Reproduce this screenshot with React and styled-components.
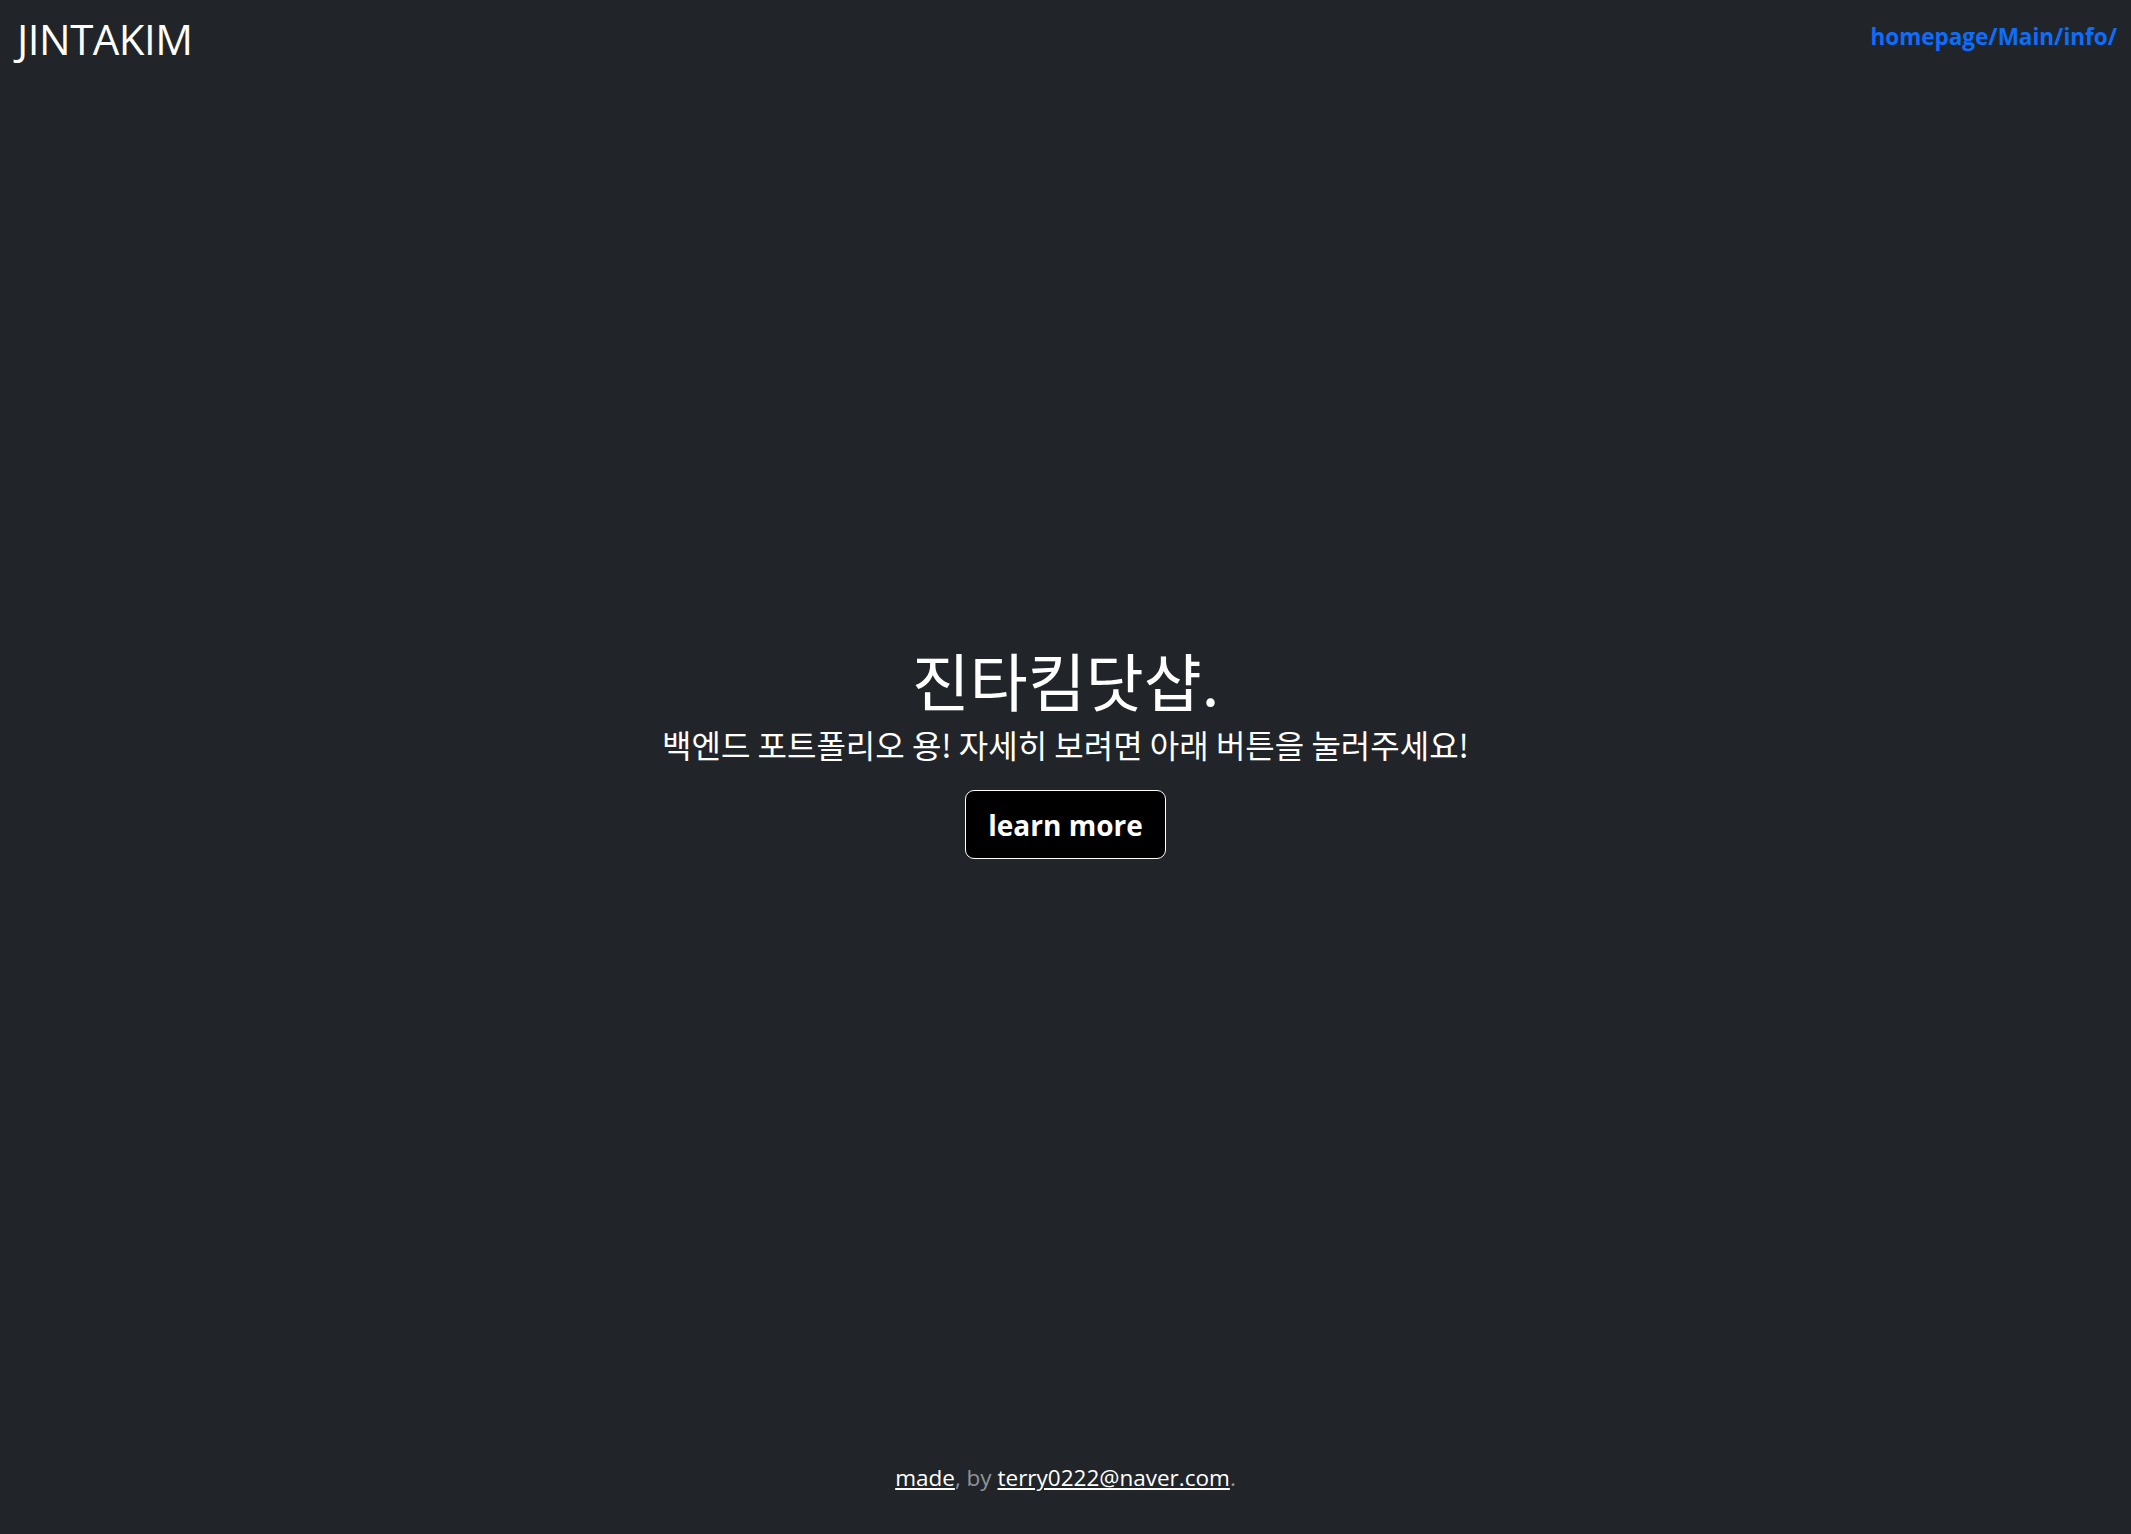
import styled, { createGlobalStyle } from 'styled-components';

const GlobalStyle = createGlobalStyle`
  html, body {
    margin: 0;
    padding: 0;
    height: 100%;
    background-color: #212529;
  }
  #root {
    height: 100%;
  }
`;

const App = () => {
  return (
    <>
      <GlobalStyle />
      <Page>
        <Header>
          <Brand>JINTAKIM</Brand>
          <NavLink href="#">homepage/Main/info/</NavLink>
        </Header>
        <Main>
          <Title>진타킴닷샵.</Title>
          <Lead>백엔드 포트폴리오 용! 자세히 보려면 아래 버튼을 눌러주세요!</Lead>
          <LearnButton>learn more</LearnButton>
        </Main>
        <Footer>
          <FooterLink href="#">made</FooterLink>, by{' '}
          <FooterLink href="#">terry0222@naver.com</FooterLink>.
        </Footer>
      </Page>
    </>
  );
};

export default App;

const Page = styled.div`
  display: flex;
  flex-direction: column;
  min-height: 100vh;
  color: #fff;
  font-family: 'Open Sans', 'Noto Sans CJK KR', sans-serif;
  text-align: center;
`;

const Header = styled.header`
  display: flex;
  justify-content: space-between;
  align-items: flex-start;
  padding: 14px 14px 0 17px;
`;

const Brand = styled.h3`
  margin: 0;
  font-size: 42px;
  font-weight: 400;
  line-height: 1.2;
  letter-spacing: -0.5px;
`;

const NavLink = styled.a`
  margin-top: 6px;
  color: #0d6efd;
  font-size: 22.5px;
  font-weight: 700;
  text-decoration: none;
  line-height: 1.5;
`;

const Main = styled.main`
  flex: 1;
  display: flex;
  flex-direction: column;
  align-items: center;
  justify-content: center;
  padding-bottom: 26px;
`;

const Title = styled.h1`
  margin: 0;
  font-family: 'Noto Sans CJK KR', sans-serif;
  font-size: 63px;
  font-weight: 400;
  line-height: 1.2;
`;

const Lead = styled.p`
  margin: 4px 0 22px;
  font-family: 'Noto Sans CJK KR', sans-serif;
  font-size: 32px;
  font-weight: 400;
  line-height: 1.5;
`;

const LearnButton = styled.button`
  display: flex;
  align-items: center;
  justify-content: center;
  width: 201px;
  height: 69px;
  padding: 0;
  border: 1px solid #fff;
  border-radius: 9px;
  background-color: #000;
  color: #fff;
  font-family: 'Open Sans', sans-serif;
  font-size: 28px;
  font-weight: 700;
  cursor: pointer;
`;

const Footer = styled.footer`
  padding-bottom: 39px;
  color: rgba(255, 255, 255, 0.5);
  font-size: 22.5px;
  line-height: 1.5;
`;

const FooterLink = styled.a`
  color: #fff;
  text-decoration: underline;
`;
